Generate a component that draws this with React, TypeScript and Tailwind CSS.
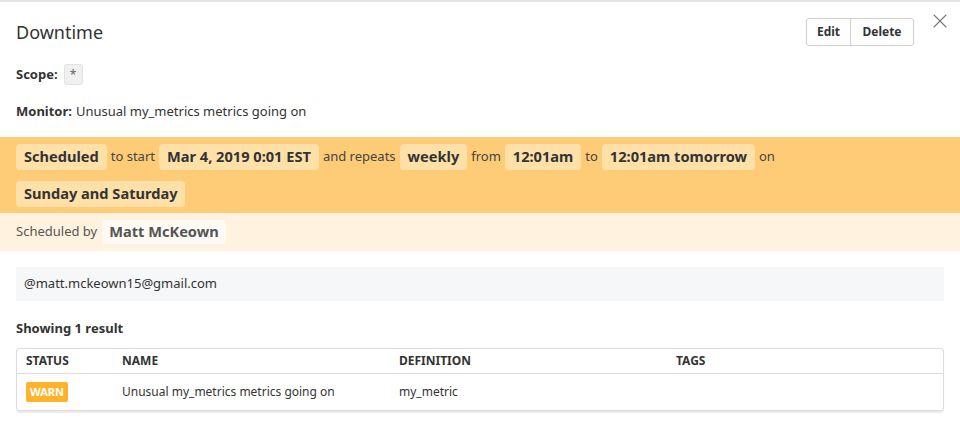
import { X } from 'lucide-react';

type PillProps = {
  readonly children: React.ReactNode;
};

function Pill({ children }: PillProps) {
  return (
    <span className="h-[26px] px-2 flex items-center rounded-[4px] bg-[#fee0a8] text-[14.6px] font-bold text-[#333]">
      {children}
    </span>
  );
}

function Word({ children }: PillProps) {
  return <span className="text-[13px] text-[#444]">{children}</span>;
}

const columns = [
  { key: 'status', label: 'Status', width: 'w-[96px]' },
  { key: 'name', label: 'Name', width: 'w-[277px]' },
  { key: 'definition', label: 'Definition', width: 'w-[277px]' },
  { key: 'tags', label: 'Tags', width: 'flex-1' },
];

export default function App() {
  return (
    <div
      className="relative w-[960px] h-[443px] bg-white border-t-2 border-[#e6e6e6] text-[#333]"
      style={{ fontFamily: '"Noto Sans", "Open Sans", sans-serif' }}
    >
      <button className="absolute right-[8px] top-[7px] text-[#777]" aria-label="Close">
        <X className="w-[24px] h-[24px]" strokeWidth={1.1} />
      </button>

      <div className="px-4">
        <div className="flex items-center pt-[16px]">
          <h1 className="text-[18px] leading-6 text-[#333] flex-1">Downtime</h1>
          <div className="flex mr-[30px] h-[28px] border border-[#cfcfcf] rounded-[3px] text-[12px] font-bold text-[#333]">
            <span className="w-[44px] flex items-center justify-center border-r border-[#cfcfcf]">Edit</span>
            <span className="w-[62px] flex items-center justify-center">Delete</span>
          </div>
        </div>

        <div className="flex items-center mt-[18px] h-[21px] text-[13px]">
          <span className="font-bold">Scope:</span>
          <span className="ml-[6px] w-[19px] h-[21px] flex items-center justify-center rounded-[3px] bg-[#f0f0f0] border border-[#e2e2e2] text-[12px] text-[#666]">
            *
          </span>
        </div>

        <div className="mt-[17px] h-[20px] flex items-center text-[13px]">
          <span className="font-bold">Monitor:</span>
          <span className="ml-1 text-[#333]">Unusual my_metrics metrics going on</span>
        </div>
      </div>

      <div className="mt-[15px] bg-[#fecc77] px-4 pt-[7px] pb-[6px] flex flex-wrap items-center gap-x-[4px] gap-y-[11px]">
        <Pill>Scheduled</Pill>
        <Word>to start</Word>
        <Pill>Mar 4, 2019 0:01 EST</Pill>
        <Word>and repeats</Word>
        <Pill>weekly</Pill>
        <Word>from</Word>
        <Pill>12:01am</Pill>
        <Word>to</Word>
        <Pill>12:01am tomorrow</Pill>
        <Word>on</Word>
        <Pill>Sunday and Saturday</Pill>
      </div>

      <div className="h-[38px] bg-[#fff3df] px-4 flex items-center gap-[5px]">
        <span className="text-[13px] text-[#555]">Scheduled by</span>
        <span className="h-[24px] px-[7px] flex items-center rounded-[3px] bg-[#fffaf3] text-[14.6px] font-bold text-[#555]">
          Matt McKeown
        </span>
      </div>

      <div className="px-4">
        <div className="mt-[16px] h-[34px] bg-[#f6f7f8] px-2 flex items-center text-[13px] text-[#333]">
          @matt.mckeown15@gmail.com
        </div>

        <div className="mt-[18px] text-[13px] leading-[18px] font-bold">Showing 1 result</div>

        <div className="mt-[11px] border border-[#dcdcdc] rounded-[3px] shadow-[0_2px_1px_rgba(0,0,0,0.08)]">
          <div className="flex h-[25px] items-center border-b border-[#dcdcdc] text-[12px] font-bold uppercase text-[#333]">
            {columns.map((c) => (
              <div key={c.key} className={`${c.width} px-[9px]`}>
                {c.label}
              </div>
            ))}
          </div>
          <div className="flex h-[36px] items-center text-[12px] text-[#333]">
            <div className="w-[96px] px-[9px]">
              <span className="inline-flex h-[20px] px-[4px] items-center rounded-[2px] bg-[#fdb42c] text-white font-bold text-[11px]">
                WARN
              </span>
            </div>
            <div className="w-[277px] px-[9px]">Unusual my_metrics metrics going on</div>
            <div className="w-[277px] px-[9px]">my_metric</div>
            <div className="flex-1 px-[9px]" />
          </div>
        </div>
      </div>
    </div>
  );
}
